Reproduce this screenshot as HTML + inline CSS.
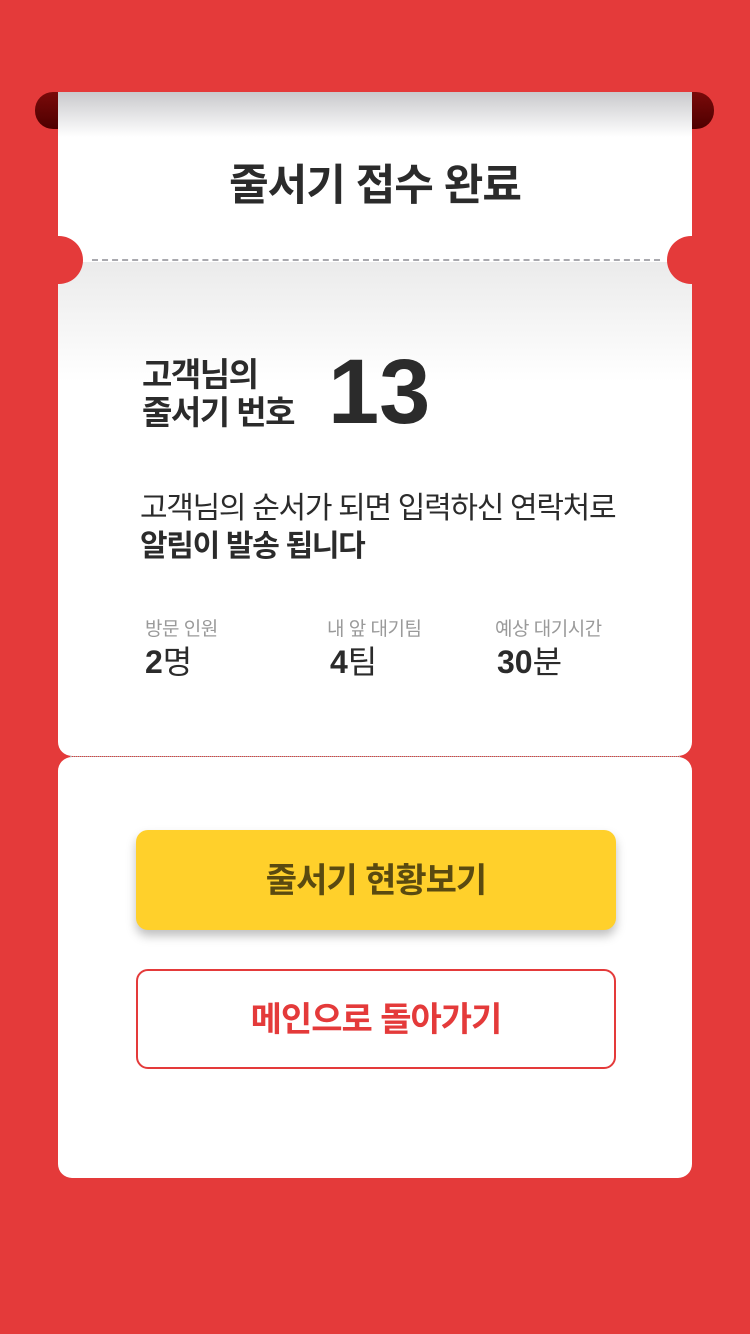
<!DOCTYPE html>
<html><head><meta charset="utf-8"><style>
*{margin:0;padding:0;box-sizing:border-box}
body{width:750px;height:1334px;background:#e43a3a;position:relative;overflow:hidden;font-family:"Liberation Sans","Noto Sans CJK KR",sans-serif;color:#2b2b2b}
.abs{position:absolute}
.roll{left:35px;top:92px;width:679px;height:37px;border-radius:18px;background:linear-gradient(#7a0a0a,#4e0000)}
.card1{left:58px;top:92px;width:634px;height:664px;background:#fff;border-radius:0 0 14px 14px;overflow:hidden}
.card2{left:58px;top:757px;width:634px;height:421px;background:#fff;border-radius:14px}
.notch{width:48px;height:48px;border-radius:50%;background:#e43a3a}
</style></head><body>
<div class="abs roll"></div>
<div class="abs card1">
  <div class="abs" style="left:0;top:0;width:634px;height:45px;background:linear-gradient(#c9c9cc,#fff)"></div>
  <div class="abs" style="left:0;top:170px;width:634px;height:120px;background:linear-gradient(#ebebeb,#fff)"></div>
  <div class="abs notch" style="left:-23px;top:144px"></div>
  <div class="abs notch" style="left:609px;top:144px"></div>
  <div class="abs" style="left:34px;top:167px;width:568px;border-top:2px dashed #a9a9ae"></div>
</div>
<div class="abs card2"></div>
<div class="abs" style="left:70px;top:756px;width:610px;border-top:1px dotted #aaa"></div>
<div class="abs" style="left:0;top:156px;width:750px;text-align:center;font-size:43px;font-weight:bold;line-height:60px;letter-spacing:-1px">줄서기 접수 완료</div>
<div class="abs" style="left:142px;top:356px;font-size:33px;font-weight:bold;line-height:38px;letter-spacing:-1.5px">고객님의<br>줄서기 번호</div>
<div class="abs" style="left:328px;top:342px;font-size:92px;font-weight:bold;line-height:100px">13</div>
<div class="abs" style="left:140px;top:490px;font-size:30px;line-height:38px;letter-spacing:-1.3px">고객님의 순서가 되면 입력하신 연락처로<br><b>알림이 발송 됩니다</b></div>
<div class="abs" style="left:145px;top:614px;font-size:19px;color:#9a9a9a;letter-spacing:-0.5px">방문 인원</div>
<div class="abs" style="left:327px;top:614px;font-size:19px;color:#9a9a9a;letter-spacing:-0.5px">내 앞 대기팀</div>
<div class="abs" style="left:495px;top:614px;font-size:19px;color:#9a9a9a;letter-spacing:-0.5px">예상 대기시간</div>
<div class="abs" style="left:145px;top:642px;font-size:32px;line-height:40px"><b>2</b>명</div>
<div class="abs" style="left:330px;top:642px;font-size:32px;line-height:40px"><b>4</b>팀</div>
<div class="abs" style="left:497px;top:642px;font-size:32px;line-height:40px"><b>30</b>분</div>
<div class="abs" style="left:136px;top:830px;width:480px;height:100px;background:#ffd02b;border-radius:12px;box-shadow:0 6px 10px rgba(0,0,0,.25);text-align:center;line-height:102px;font-size:34px;font-weight:bold;color:#5a4a10;letter-spacing:-1px">줄서기 현황보기</div>
<div class="abs" style="left:136px;top:969px;width:480px;height:100px;border:2px solid #e43a3a;border-radius:12px;text-align:center;line-height:98px;font-size:34px;font-weight:bold;color:#e43a3a;letter-spacing:-1px">메인으로 돌아가기</div>
</body></html>
